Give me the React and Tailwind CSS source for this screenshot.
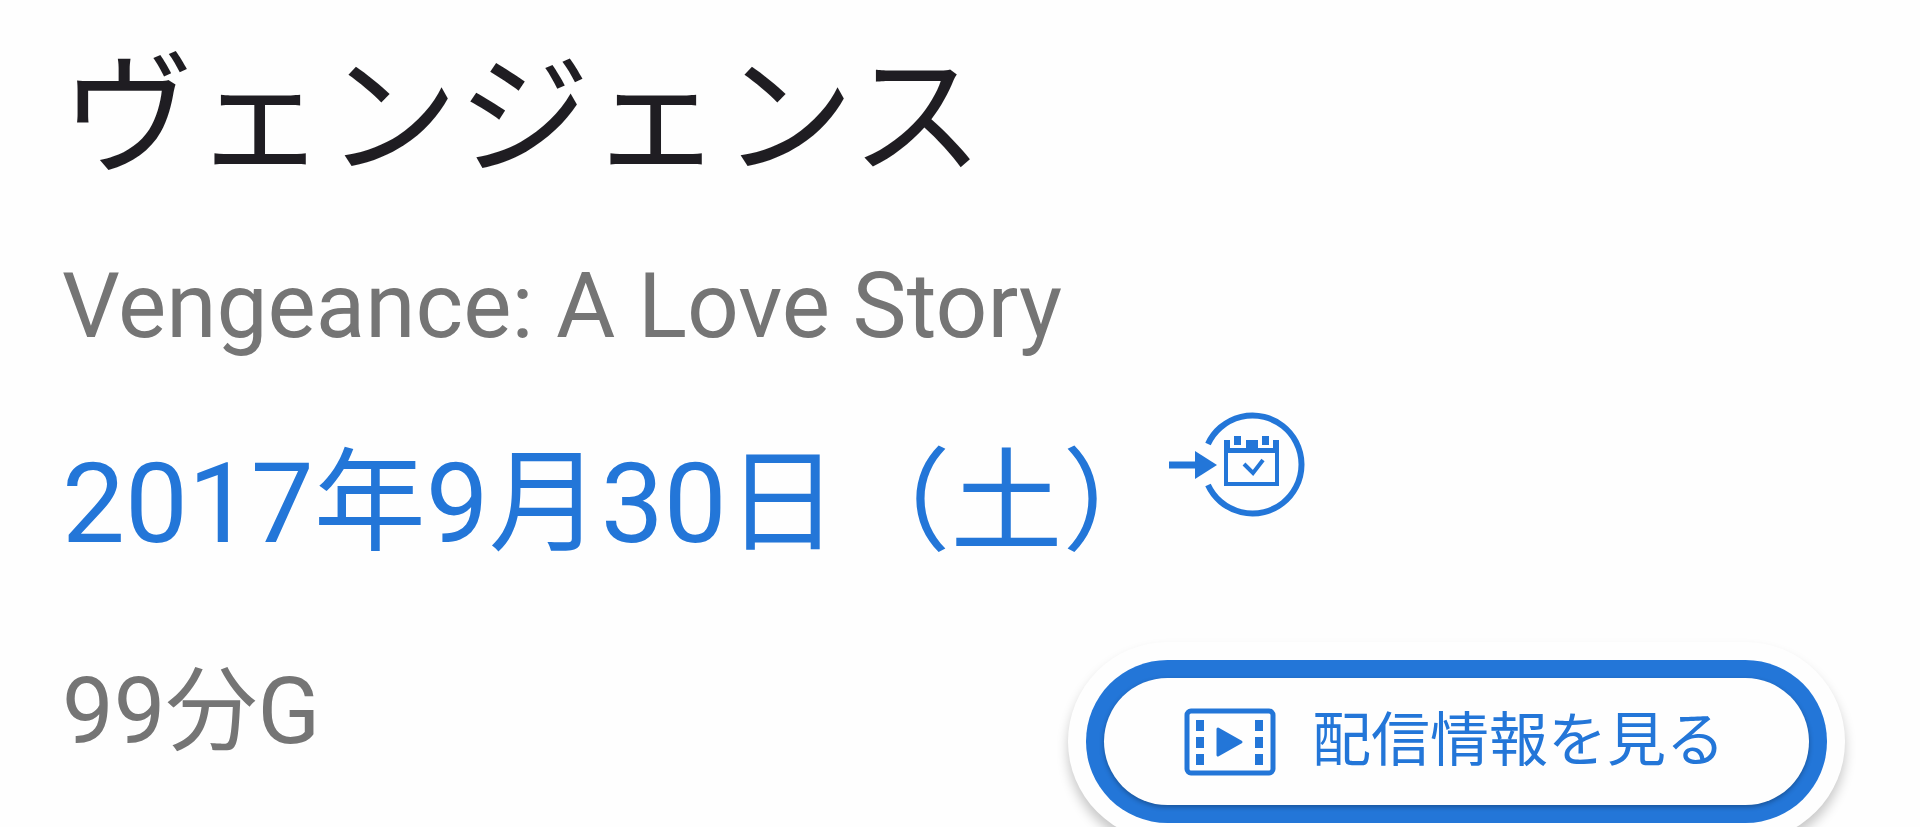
import React from "react";

function CalendarIcon() {
  return (
    <svg viewBox="0 0 136 108" className="h-[108px] w-[136px]" fill="none" stroke="currentColor" aria-hidden="true">
      <path d="M39 34A49 49 0 1 1 39 75" strokeWidth="6" />
      <path d="M0 55H28" strokeWidth="7" />
      <path d="M26 41L48 55L26 69Z" fill="currentColor" stroke="none" />
      <path d="M57 40V74H108V40" strokeWidth="4" />
      <path d="M55 30H61V38H77V30H89V38H104V30H110V43H55Z" fill="currentColor" stroke="none" />
      <path d="M65 26H72V35H65ZM93 26H100V35H93Z" fill="currentColor" stroke="none" />
      <path d="M75 54L84 63L94 50" strokeWidth="4" />
    </svg>
  );
}

function FilmIcon() {
  return (
    <svg viewBox="0 0 92 68" className="h-[68px] w-[92px]" fill="none" stroke="currentColor" aria-hidden="true">
      <rect x="3" y="3" width="86" height="62" rx="4" strokeWidth="5" />
      <path d="M16 12V57M75 12V57" strokeWidth="8" strokeDasharray="11 6" />
      <path d="M34 21L57 34L34 47Z" fill="currentColor" strokeWidth="3" strokeLinejoin="round" />
    </svg>
  );
}

export default function App() {
  return (
    <main className="flex h-screen w-full flex-col overflow-hidden bg-[#fefefe] pr-[75px] pl-[62px] font-[Roboto,'Noto_Sans_CJK_JP',sans-serif] text-[#757575]">
      <h1 className="mt-[38px] text-[132px] leading-[160px] text-[#1f1d22]">ヴェンジェンス</h1>
      <p className="mt-12 text-[91px] leading-[120px]">Vengeance: A Love Story</p>
      <div className="mt-11 flex items-start text-[#2376d8]">
        <a href="#release" className="text-[112px] leading-[188px]">2017年9月30日（土）</a>
        <button type="button" aria-label="カレンダーに追加" className="-ml-1.5">
          <CalendarIcon />
        </button>
      </div>
      <div className="mt-11 flex items-start justify-between">
        <p className="text-[92px] leading-[140px]">99分G</p>
        <button type="button" className="shrink-0 rounded-full bg-[#fefefe] p-[18px] text-[59px] text-[#2376d8] shadow-[0_8px_12px_rgba(0,0,0,0.22)]">
          <span className="block rounded-full bg-[#2376d8] p-[18px]">
            <span className="flex h-[127px] items-center gap-9 rounded-full bg-[#fefefe] pr-[84px] pl-20 shadow-[0_2px_5px_rgba(0,0,0,0.3)]">
              <FilmIcon />
              配信情報を見る
            </span>
          </span>
        </button>
      </div>
    </main>
  );
}
